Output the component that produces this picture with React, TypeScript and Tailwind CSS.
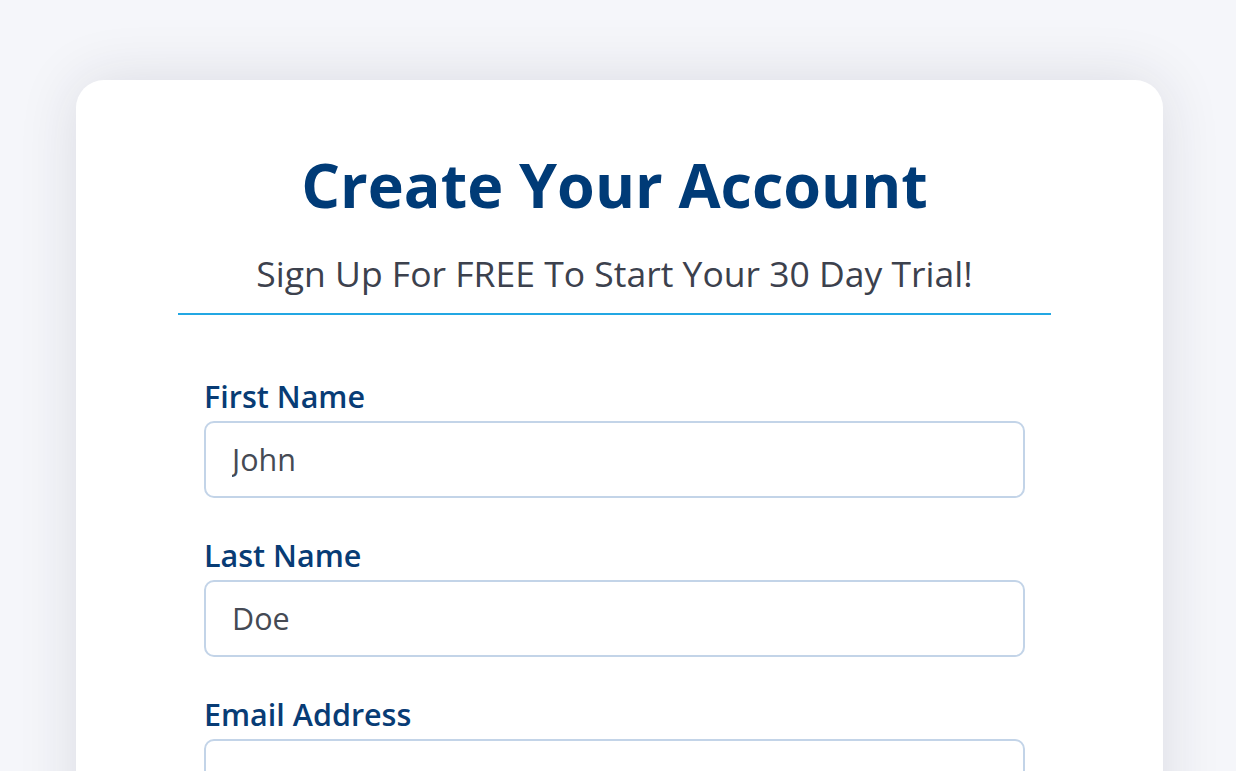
import React from "react";

function Field({ label, value }: { label: string; value: string }) {
  return (
    <div className="flex flex-col">
      <label className="text-[30.5px] leading-[36px] font-semibold text-[#083c75]">{label}</label>
      <div className="mt-[7px] h-[77px] rounded-[10px] border-2 border-[#c3d4e8] bg-white flex items-center px-[26px]">
        <input
          className="w-full outline-none bg-transparent text-[30.5px] text-[#454a54]"
          style={{ fontFamily: '"Open Sans", sans-serif' }}
          defaultValue={value}
        />
      </div>
    </div>
  );
}

export default function App() {
  return (
    <div
      className="min-h-screen bg-[#f5f6fa] pt-[80px] pl-[76px] pr-[73px] overflow-hidden"
      style={{ fontFamily: '"Open Sans", sans-serif' }}
    >
      <div className="bg-white rounded-[28px] shadow-[0_0_60px_rgba(30,30,60,0.12)] pt-[69px] pl-[102px] pr-[112px] pb-[80px]">
        <h1 className="text-center text-[61px] leading-[72px] font-bold text-[#003b77]">Create Your Account</h1>
        <p className="mt-[30px] text-center text-[35.5px] leading-[44px] text-[#3c414d] pb-[18px] border-b-2 border-[#23a7e3]">
          Sign Up For FREE To Start Your 30 Day Trial!
        </p>
        <div className="px-[26px] pt-[63px] flex flex-col gap-[39px]">
          <Field label="First Name" value="John" />
          <Field label="Last Name" value="Doe" />
          <Field label="Email Address" value="" />
          <Field label="Password" value="" />
        </div>
      </div>
    </div>
  );
}
